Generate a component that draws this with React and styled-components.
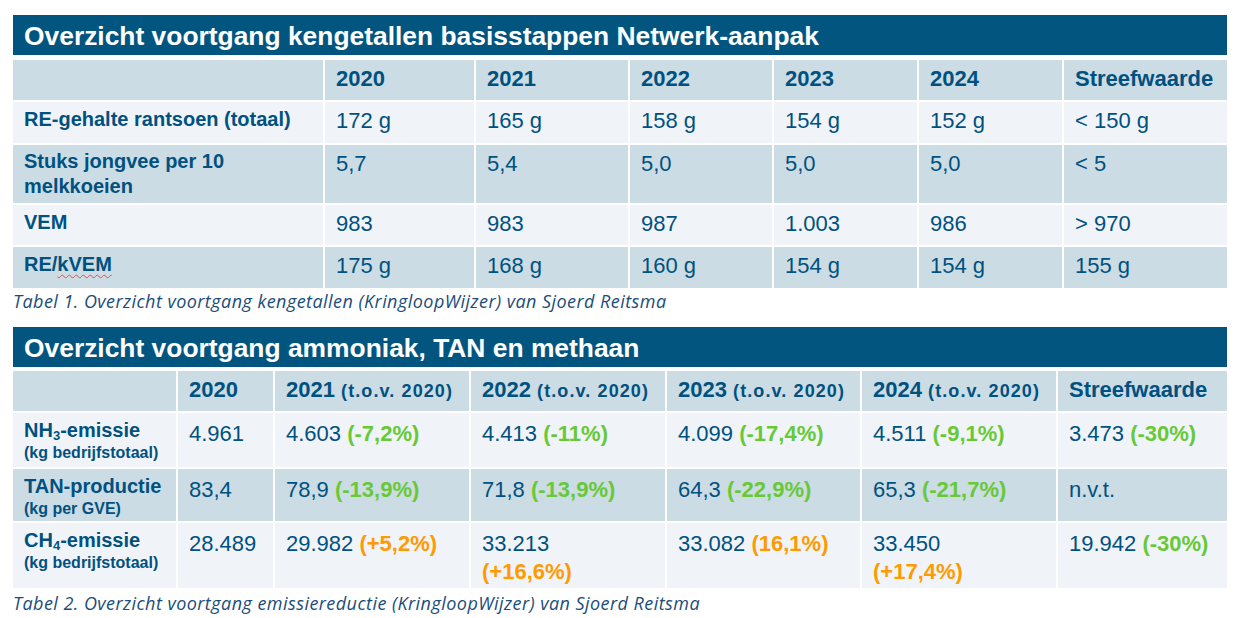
import React from "react";
import styled, { createGlobalStyle } from "styled-components";

const GlobalStyle = createGlobalStyle`
  html, body { margin: 0; padding: 0; background: #ffffff; }
  body { font-family: "Liberation Sans", Arial, sans-serif; }
`;

const INK = "#00517f";
const DARK = "#cbdce5";
const LIGHT = "#f0f4f8";

const Page = styled.div`
  width: 1214px;
  padding: 15px 0 0 13px;
  display: flex;
  flex-direction: column;
`;

const TitleBar = styled.div`
  height: 40px;
  box-sizing: border-box;
  background: #02557f;
  color: #ffffff;
  font: bold 26.4px/1.28 "Liberation Sans", Arial, sans-serif;
  padding: 5px 11px 0;
  white-space: nowrap;
`;

const Grid = styled.div`
  display: grid;
  grid-template-columns: ${(p) => p.$cols};
  grid-template-rows: ${(p) => p.$rows};
  gap: 2px;
  margin-top: ${(p) => p.$top}px;
  background: #ffffff;
`;

const Cell = styled.div`
  background: ${(p) => (p.$tone === "light" ? LIGHT : DARK)};
  color: ${INK};
  padding: ${(p) => p.$pt ?? 4.5}px 11px 0;
  box-sizing: border-box;
  min-width: 0;
`;

const HeadCell = styled(Cell)`
  font: bold 22px/1.28 "Liberation Sans", Arial, sans-serif;
  white-space: nowrap;
`;

const Tov = styled.span`
  font-size: 18px;
  letter-spacing: 1.1px;
`;

const LabelCell = styled(Cell)`
  font: bold 20px/1.28 "Liberation Sans", Arial, sans-serif;
`;

const SubLabel = styled.div`
  font-size: 16px;
  line-height: 1.27;
`;

const Sub = styled.sub`
  font-size: 13px;
  line-height: 0;
  vertical-align: -3px;
`;

const ValueCell = styled(Cell)`
  font: 22px/1.28 "Liberation Sans", Arial, sans-serif;
`;

const Pct = styled.span`
  font-weight: bold;
  color: ${(p) => (p.$up ? "#ff9a00" : "#67c935")};
`;

const Squiggle = styled.span`
  text-decoration: underline wavy #e8474f;
  text-decoration-thickness: 1px;
  text-underline-offset: 3px;
`;

const Caption = styled.div`
  font: italic 18px/1.2 "Open Sans", Lato, sans-serif;
  letter-spacing: 0.45px;
  color: #1a4d7a;
  margin-top: ${(p) => p.$top}px;
  margin-bottom: ${(p) => p.$bottom}px;
  white-space: nowrap;
`;

const t1Cols = "310px 149px 152px 142px 143px 143px 163px";
const t1Rows = "40px 41px 58px 40px 41px";
const t2Cols = "163px 95px 194px 194px 193px 194px 169px";
const t2Rows = "40px 54px 52px 65px";

const table1 = [
  { label: "RE-gehalte rantsoen (totaal)", vals: ["172 g", "165 g", "158 g", "154 g", "152 g", "< 150 g"] },
  { label: ["Stuks jongvee per 10", "melkkoeien"], vals: ["5,7", "5,4", "5,0", "5,0", "5,0", "< 5"] },
  { label: "VEM", vals: ["983", "983", "987", "1.003", "986", "> 970"] },
  {
    label: (
      <>
        RE/<Squiggle>kVEM</Squiggle>
      </>
    ),
    vals: ["175 g", "168 g", "160 g", "154 g", "154 g", "155 g"],
  },
];

const table2 = [
  {
    label: (
      <>
        NH<Sub>3</Sub>-emissie
      </>
    ),
    sub: "(kg bedrijfstotaal)",
    vals: [
      ["4.961"],
      ["4.603", "(-7,2%)"],
      ["4.413", "(-11%)"],
      ["4.099", "(-17,4%)"],
      ["4.511", "(-9,1%)"],
      ["3.473", "(-30%)"],
    ],
  },
  {
    label: "TAN-productie",
    sub: "(kg per GVE)",
    vals: [
      ["83,4"],
      ["78,9", "(-13,9%)"],
      ["71,8", "(-13,9%)"],
      ["64,3", "(-22,9%)"],
      ["65,3", "(-21,7%)"],
      ["n.v.t."],
    ],
  },
  {
    label: (
      <>
        CH<Sub>4</Sub>-emissie
      </>
    ),
    sub: "(kg bedrijfstotaal)",
    vals: [
      ["28.489"],
      ["29.982", "(+5,2%)", true],
      ["33.213", "(+16,6%)", true, true],
      ["33.082", "(16,1%)", true],
      ["33.450", "(+17,4%)", true, true],
      ["19.942", "(-30%)"],
    ],
  },
];

export default function App() {
  return (
    <>
      <GlobalStyle />
      <Page>
        <TitleBar>Overzicht voortgang kengetallen basisstappen Netwerk-aanpak</TitleBar>
        <Grid $cols={t1Cols} $rows={t1Rows} $top={5}>
          <HeadCell $tone="dark" />
          {["2020", "2021", "2022", "2023", "2024", "Streefwaarde"].map((h) => (
            <HeadCell key={h} $tone="dark">
              {h}
            </HeadCell>
          ))}
          {table1.map((row, i) => {
            const tone = i % 2 === 0 ? "light" : "dark";
            return (
              <React.Fragment key={i}>
                <LabelCell $tone={tone} $pt={i === 1 ? 3.5 : 4.5}>
                  {Array.isArray(row.label) ? (
                    <>
                      {row.label[0]}
                      <br />
                      {row.label[1]}
                    </>
                  ) : (
                    row.label
                  )}
                </LabelCell>
                {row.vals.map((v, j) => (
                  <ValueCell key={j} $tone={tone}>
                    {v}
                  </ValueCell>
                ))}
              </React.Fragment>
            );
          })}
        </Grid>
        <Caption $top={3} $bottom={14.5}>
          Tabel 1. Overzicht voortgang kengetallen (KringloopWijzer) van Sjoerd Reitsma
        </Caption>

        <TitleBar>Overzicht voortgang ammoniak, TAN en methaan</TitleBar>
        <Grid $cols={t2Cols} $rows={t2Rows} $top={4}>
          <HeadCell $tone="dark" />
          <HeadCell $tone="dark">2020</HeadCell>
          {["2021", "2022", "2023", "2024"].map((y) => (
            <HeadCell key={y} $tone="dark">
              {y} <Tov>(t.o.v. 2020)</Tov>
            </HeadCell>
          ))}
          <HeadCell $tone="dark">Streefwaarde</HeadCell>
          {table2.map((row, i) => {
            const tone = i % 2 === 0 ? "light" : "dark";
            return (
              <React.Fragment key={i}>
                <LabelCell $tone={tone}>
                  {row.label}
                  <SubLabel>{row.sub}</SubLabel>
                </LabelCell>
                {row.vals.map(([num, pct, up, wrap], j) => (
                  <ValueCell key={j} $tone={tone} $pt={6.5}>
                    {num}
                    {pct && (wrap ? <br /> : " ")}
                    {pct && <Pct $up={up}>{pct}</Pct>}
                  </ValueCell>
                ))}
              </React.Fragment>
            );
          })}
        </Grid>
        <Caption $top={5} $bottom={0}>
          Tabel 2. Overzicht voortgang emissiereductie (KringloopWijzer) van Sjoerd Reitsma
        </Caption>
      </Page>
    </>
  );
}
